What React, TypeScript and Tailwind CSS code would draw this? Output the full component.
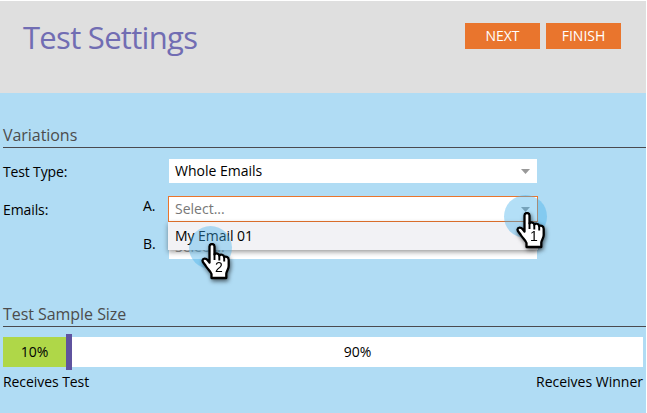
import React from "react";

function Caret() {
  return (
    <svg className="h-[5px] w-[9px] shrink-0" viewBox="0 0 9 5">
      <path d="M0 0h9L4.500 5z" fill="#999999" />
    </svg>
  );
}

function Pointer({ step }: { step: string }) {
  return (
    <div className="relative h-[38px] w-[32px] drop-shadow-[1px_2px_2px_rgba(0,0,0,0.6)]">
      <svg className="h-[38px] w-[32px]" viewBox="0 0 32 38">
        <path
          d="M8.500 3.500C8.500 .2 13.500 .2 13.500 3.500V11.500C14.500 9.800 18 10.300 18.300 12.500C19.500 11 22.800 11.500 23.200 14C25 13 27.700 14 27.700 17V23C27.700 26.500 25.500 28 25.300 30.500V35H10.500V31C9.500 28 6.500 26 4.800 23C3.500 20.800 1.200 19 1.500 17.500C2 15 5 15.200 6.500 17L8.500 19.500Z"
          fill="white"
          stroke="black"
          strokeWidth="2.300"
          strokeLinejoin="round"
        />
        <path d="M13.500 10.500v6.500M18.300 12.500v5M23.200 14v4.500" stroke="black" strokeWidth="1.900" />
      </svg>
      <span className="absolute left-[13px] top-[16px] w-[10px] text-center font-['Liberation_Sans',sans-serif] text-[14px] leading-[16px] tracking-normal text-black">
        {step}
      </span>
    </div>
  );
}

function Select({ value }: { value: string }) {
  return (
    <div className="flex h-6 w-[368px] items-center justify-between bg-white pl-1.5 pr-[7px]">
      <span>{value}</span>
      <Caret />
    </div>
  );
}

function SectionTitle({ children }: { children: React.ReactNode }) {
  return (
    <h2 className="h-[26px] border-b border-[#4a4a4f] text-[16px] leading-[26px] tracking-[-0.05px] text-[#4c4c4c]">
      {children}
    </h2>
  );
}

export default function App() {
  return (
    <div className="h-[413px] w-[647px] overflow-hidden bg-white pr-px pt-px font-['Open_Sans','Noto_Sans',sans-serif] text-[14px] leading-5 text-black">
      <header className="flex h-[92px] items-start justify-between bg-[#dfdfdf] pl-[23px] pr-[25px]">
        <h1 className="pt-[14px] text-[31px] leading-[44px] tracking-[-0.7px] text-[#716db3]">Test Settings</h1>
        <div className="flex gap-1.5 pt-[22px]">
          <button className="h-[26px] w-[75px] bg-[#e9752d] text-white">NEXT</button>
          <button className="h-[26px] w-[75px] bg-[#e9752d] text-white">FINISH</button>
        </div>
      </header>
      <main className="relative h-[320px] bg-[#b0dcf4] pl-[3px] pt-[29px]">
        <SectionTitle>Variations</SectionTitle>
        <div className="mt-[11px] flex h-6 items-center">
          <span className="w-[166px] pt-0.5 tracking-[-0.15px]">Test Type:</span>
          <Select value="Whole Emails" />
        </div>
        <div className="mt-[13px] flex">
          <span className="w-[140px] pt-1 tracking-[-0.1px]">Emails:</span>
          <div>
            <div className="flex h-[26px]">
              <span className="w-[25px]">A.</span>
              <div className="relative flex h-[26px] w-[370px] items-center justify-between border border-[#e9752d] bg-white pl-1.5 pr-[7px]">
                <span className="text-[#777]">Select...</span>
                <Caret />
                <div className="absolute -left-px top-[25px] z-10 h-[28px] w-[370px] bg-[#f2f2f5] pl-[7px] leading-[27px] tracking-[-0.05px] shadow-[0_2px_5px_rgba(0,0,0,0.4)]">
                  My Email 01
                </div>
              </div>
            </div>
            <div className="mt-[13px] flex h-6">
              <span className="-mt-px w-[26px]">B.</span>
              <div className="text-[#999]">
                <Select value="Select..." />
              </div>
            </div>
          </div>
        </div>
        <div className="mt-[42px]">
          <SectionTitle>Test Sample Size</SectionTitle>
        </div>
        <div className="mr-[3px] mt-[7px] flex items-center">
          <div className="h-[30px] w-[63px] bg-[#afd748] text-center leading-[30px]">10%</div>
          <div className="h-9 w-1.5 bg-[#5f539f]" />
          <div className="h-[30px] flex-1 bg-white text-center leading-[30px]">90%</div>
        </div>
        <div className="mr-[3px] mt-[2px] flex justify-between">
          <span className="tracking-[-0.07px]">Receives Test</span>
          <span>Receives Winner</span>
        </div>
        <div className="absolute left-[504px] top-[102px] z-20 h-[43px] w-[43px] rounded-full bg-[#42aeea]/40" />
        <div className="absolute left-[189px] top-[133px] z-20 h-[43px] w-[43px] rounded-full bg-[#42aeea]/40" />
        <div className="absolute left-[516px] top-[119px] z-30">
          <Pointer step="1" />
        </div>
        <div className="absolute left-[201px] top-[150px] z-30">
          <Pointer step="2" />
        </div>
      </main>
    </div>
  );
}
